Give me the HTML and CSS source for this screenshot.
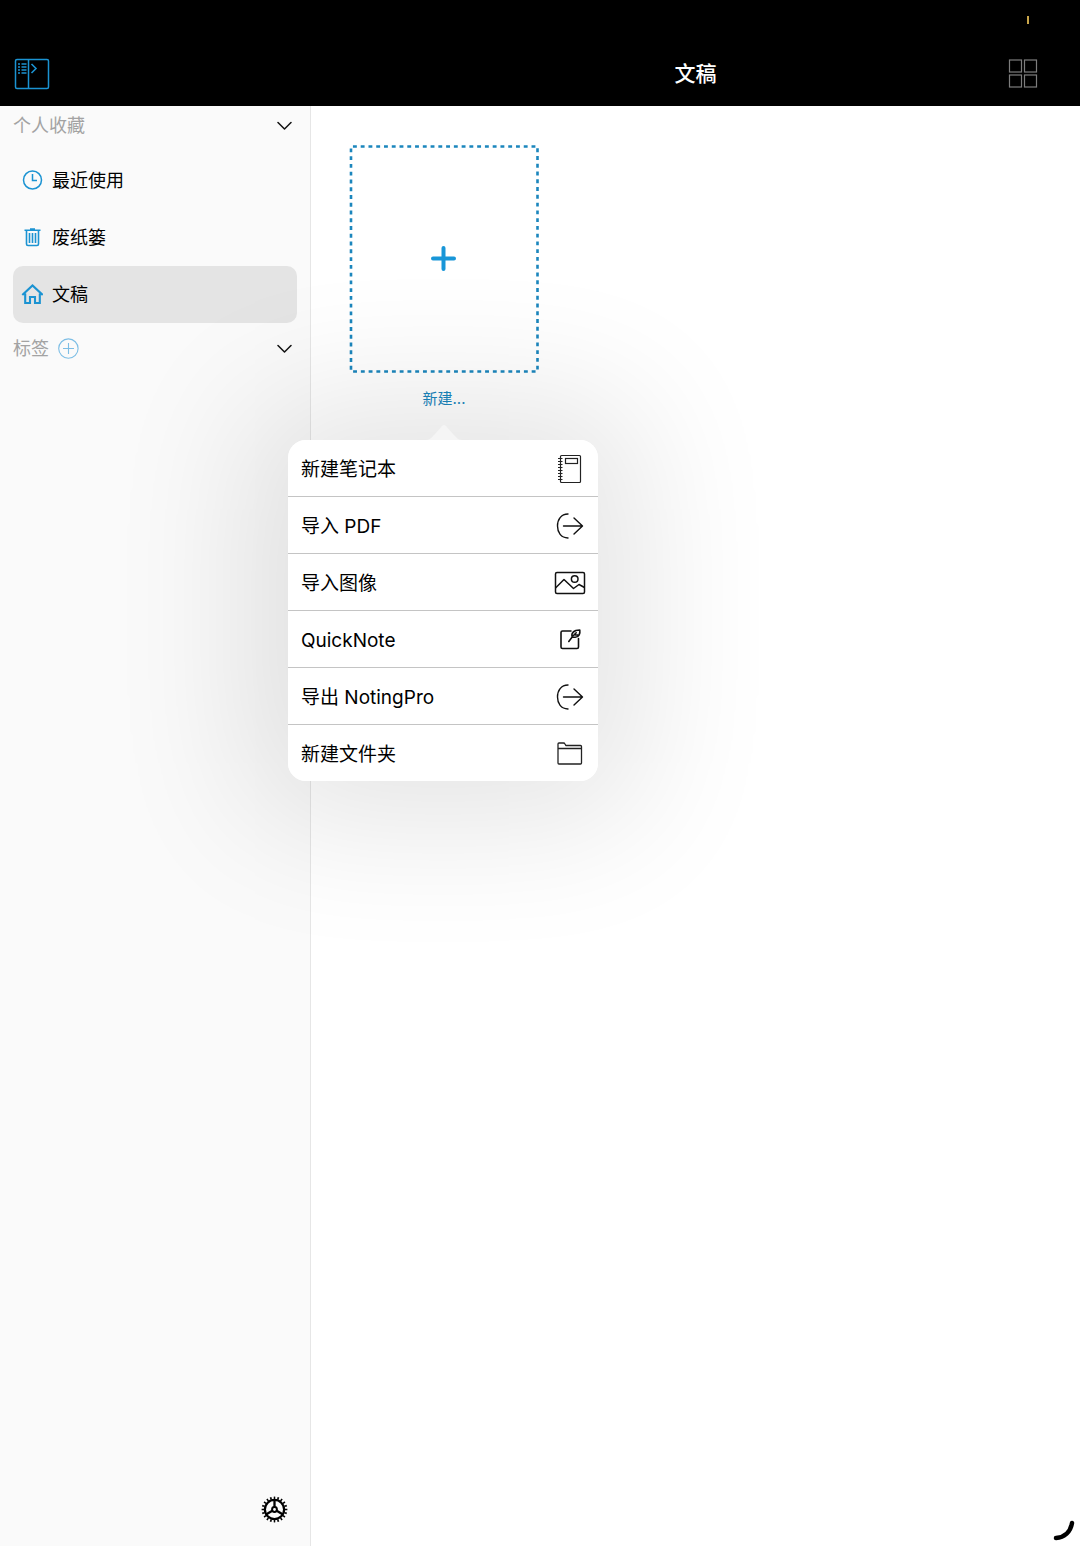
FILE: index.html
```html
<!DOCTYPE html>
<html lang="zh-CN">
<head>
<meta charset="utf-8">
<meta name="viewport" content="width=device-width, initial-scale=1">
<title>文稿</title>
<link rel="stylesheet" href="styles.css">
</head>
<body>
<div class="app">
  <header class="topbar">
    <span class="status-mark"></span>
    <div class="topbar-side">
      <button class="icon-button" type="button" aria-label="边栏">
        <svg width="36" height="32" viewBox="0 0 36 32" fill="none" stroke="#1b93d2" stroke-width="1.5">
          <rect x="1.5" y="1.5" width="33" height="29" rx="1.5"/>
          <path d="M14.5 1.5v29"/>
          <path d="M17.500 6l4.500 4.500-4.500 4.500" stroke-width="1.600"/>
          <path d="M4 6h2M7.500 6h5M4 9h2M7.500 9h5M4 12h2M7.500 12h5M4 15h2M7.500 15h5"/>
        </svg>
      </button>
    </div>
    <div class="topbar-main">
      <h1 class="title">文稿</h1>
      <button class="icon-button view-toggle" type="button" aria-label="网格视图">
        <svg width="30" height="30" viewBox="0 0 30 30" fill="none" stroke="#7d7d7d" stroke-width="1.200">
          <rect x="1.500" y="1" width="12" height="12"/>
          <rect x="16.500" y="1" width="12" height="12"/>
          <rect x="1.500" y="16" width="12" height="12"/>
          <rect x="16.500" y="16" width="12" height="12"/>
        </svg>
      </button>
    </div>
  </header>

  <div class="body">
    <aside class="sidebar">
      <div class="section-head">
        <h2 class="section-title">个人收藏</h2>
        <button class="icon-button chevron" type="button" aria-label="折叠个人收藏">
          <svg width="16" height="10" viewBox="0 0 16 10" fill="none" stroke="#111" stroke-width="1.500" stroke-linecap="round" stroke-linejoin="round"><path d="M2 1.500l6.500 6.500 6.500-6.500"/></svg>
        </button>
      </div>
      <nav class="nav">
        <a class="nav-item" href="#recent">
          <svg width="22" height="22" viewBox="0 0 22 22" fill="none" stroke="#1b93d2" stroke-width="1.500"><circle cx="11.500" cy="10" r="9"/><path d="M11.500 4v6.500h4.500"/></svg>
          最近使用
        </a>
        <a class="nav-item" href="#trash">
          <svg width="22" height="22" viewBox="0 0 22 22" fill="none" stroke="#1b93d2" stroke-width="1.600"><path d="M3.500 3.300h16M5.500 3.300v13.700q0 1.500 1.500 1.500h9q1.500 0 1.500-1.500V3.300M9 2h5M8.500 6v10M11.500 6v10M14.500 6v10"/></svg>
          废纸篓
        </a>
        <a class="nav-item selected" href="#documents" aria-current="page">
          <svg width="22" height="22" viewBox="0 0 22 22" fill="none" stroke="#1b93d2" stroke-width="2.100"><path d="M1.300 11L11.500 1.500l10.200 9.500M4.200 9.500v9.500h4.800v-6h5v6h4.800V9.500"/></svg>
          文稿
        </a>
      </nav>
      <div class="section-head">
        <h2 class="section-title">标签</h2>
        <button class="icon-button" type="button" aria-label="添加标签">
          <svg width="22" height="22" viewBox="0 0 22 22" fill="none" stroke="#7dbee5" stroke-width="1.100"><circle cx="11.400" cy="10.600" r="9.700"/><path d="M11.500 5v11M6 10.500h11"/></svg>
        </button>
        <button class="icon-button chevron" type="button" aria-label="折叠标签">
          <svg width="16" height="10" viewBox="0 0 16 10" fill="none" stroke="#111" stroke-width="1.500" stroke-linecap="round" stroke-linejoin="round"><path d="M2 1.500l6.500 6.500 6.500-6.500"/></svg>
        </button>
      </div>
      <div class="sidebar-foot">
        <button class="icon-button" type="button" aria-label="设置">
          <svg width="28" height="28" viewBox="0 0 28 28" fill="none" stroke="#000">
            <circle cx="14.500" cy="13.500" r="9.600" stroke-width="2.200"/>
            <circle cx="14.500" cy="13.500" r="11.600" stroke-width="2.600" pathLength="80" stroke-dasharray="1.700 2.300" stroke-dashoffset=".85"/>
            <circle cx="14.500" cy="13.500" r="2.400" stroke-width="2"/>
            <path d="M14.500 11V4M12.300 14.800L6 18.500M16.700 14.800L23 18.500" stroke-width="2.300"/>
          </svg>
        </button>
      </div>
    </aside>

    <main class="content">
      <div class="create">
        <button class="create-card" type="button">
          <svg class="create-frame" width="188" height="228" viewBox="0 0 188 228" fill="none" stroke="#1b86bd">
            <path d="M1 1.500h186.500v225H1z" stroke-width="2.600" pathLength="848" stroke-dasharray="4 4" stroke-dashoffset="-2"/>
            <path d="M93.500 103v21M83 113.500h21" stroke="#1896d8" stroke-width="4" stroke-linecap="round"/>
          </svg>
          <span class="create-label">新建...</span>
        </button>

        <div class="popover">
          <svg class="popover-arrow" width="36" height="17" viewBox="0 0 36 17" fill="#f5f5f5"><path d="M0 17c4 0 6-3 9-6l7-8q2-2 4 0l7 8c3 3 5 6 9 6z"/></svg>
          <div class="menu">
            <button class="menu-item" type="button">新建笔记本
              <svg width="32" height="32" viewBox="0 2 32 32" fill="none" stroke="#222" stroke-width="1.200"><rect x="6.500" y="3.500" width="20" height="27" rx="1"/><rect x="11.500" y="6.500" width="12" height="5"/><path d="M4 6.500h4.500M4 9.500h4.500M4 12.500h4.500M4 15.500h4.500M4 18.500h4.500M4 21.500h4.500M4 24.500h4.500M4 27.500h4.500"/></svg>
            </button>
            <button class="menu-item" type="button">导入 PDF
              <svg width="32" height="32" viewBox="0 2 32 32" fill="none" stroke="#111" stroke-width="1.400" stroke-linecap="round" stroke-linejoin="round"><path d="M14 5C7 5 3.500 10.500 3.500 17S7 29 14 29M9.500 17h18.500M20 9l8.500 8-8.500 8"/></svg>
            </button>
            <button class="menu-item" type="button">导入图像
              <svg width="32" height="32" viewBox="0 2 32 32" fill="none" stroke="#111" stroke-width="1.500" stroke-linejoin="round"><rect x="1.500" y="6.500" width="29" height="21" rx="1.500"/><circle cx="20.700" cy="13" r="3.300"/><path d="M1.500 22l8.500-8.500 9.500 9L25 18.500l5.500 3"/></svg>
            </button>
            <button class="menu-item" type="button">QuickNote
              <svg width="32" height="32" viewBox="0 2 32 32" fill="none" stroke="#111" stroke-width="1.600" stroke-linecap="round" stroke-linejoin="round"><path d="M17 8H8.500Q7 8 7 9.500v14.500Q7 25.500 8.500 25.500H23q1.500 0 1.500-1.500V15.500M14.800 18.500l3.400-4.500M18.200 14c-1.200-3.700 1.300-7 7.600-7 .5 3.500-.6 7-4.600 7.300zM19.500 12.500l2.700-2.700M21.500 12h2.500"/></svg>
            </button>
            <button class="menu-item" type="button">导出 NotingPro
              <svg width="32" height="32" viewBox="0 2 32 32" fill="none" stroke="#111" stroke-width="1.400" stroke-linecap="round" stroke-linejoin="round"><path d="M14 5C7 5 3.500 10.500 3.500 17S7 29 14 29M9.500 17h18.500M20 9l8.500 8-8.500 8"/></svg>
            </button>
            <button class="menu-item" type="button">新建文件夹
              <svg width="32" height="32" viewBox="0 2 32 32" fill="none" stroke="#222" stroke-width="1.300" stroke-linejoin="round"><path d="M4 12V7q0-1 1-1H9.500q1 0 1.500 1l.8 1.500h14.700q1 0 1 1V26q0 1-1 1H5q-1 0-1-1V11.500h23.500"/></svg>
            </button>
          </div>
        </div>
      </div>
    </main>
  </div>

  <svg class="corner-mark" width="24" height="24" viewBox="0 0 24 24" fill="none" stroke="#000" stroke-width="4.500" stroke-linecap="round"><path d="M4 19C12.500 18.500 18.500 13 20 4"/></svg>
</div>
</body>
</html>
```
FILE: styles.css
```css
* {
  box-sizing: border-box;
}

body {
  margin: 0;
  background: #fff;
  color: #000;
  font-family: Inter, "Noto Sans CJK SC", sans-serif;
  font-size: 18px;
}

h1,
h2 {
  margin: 0;
}

svg {
  display: block;
  flex: none;
}

button {
  margin: 0;
  padding: 0;
  border: 0;
  background: none;
  color: inherit;
  font: inherit;
  cursor: pointer;
}

.app {
  position: relative;
  display: flex;
  flex-direction: column;
  min-height: 100vh;
}

/* Top bar */
.topbar {
  position: relative;
  display: flex;
  padding-top: 42px;
  height: 106px;
  background: #000;
  color: #fff;
}

.topbar-side {
  display: flex;
  align-items: center;
  width: 311px;
  padding-left: 14px;
}

.topbar-main {
  display: grid;
  grid-template-columns: 1fr auto 1fr;
  align-items: center;
  flex: 1;
  padding: 0 42px;
}

.title {
  grid-column: 2;
  font-size: 21px;
  font-weight: 500;
  line-height: 32px;
}

.view-toggle {
  justify-self: end;
}

.status-mark {
  position: absolute;
  top: 16px;
  right: 51px;
  width: 2px;
  height: 8px;
  background: #c9a64a;
}

/* Sidebar */
.body {
  display: flex;
  flex: 1;
}

.sidebar {
  display: flex;
  flex-direction: column;
  gap: 6px;
  width: 311px;
  border-right: 1px solid #e6e6e6;
  background: #fafafa;
}

.section-head {
  display: flex;
  align-items: center;
  gap: 8px;
  height: 40px;
  padding: 0 18px 0 13px;
}

.section-title {
  color: #a3a3a3;
  font-size: 18px;
  font-weight: 400;
  line-height: 28px;
}

.chevron {
  margin-left: auto;
}

.nav {
  display: flex;
  flex-direction: column;
  padding: 0 13px;
}

.nav-item {
  display: flex;
  align-items: center;
  gap: 9px;
  height: 57px;
  padding: 0 8px;
  border-radius: 10px;
  color: #000;
  line-height: 28px;
  text-decoration: none;
}

.nav-item.selected {
  background: #e4e4e4;
}

.sidebar-foot {
  display: flex;
  justify-content: flex-end;
  margin-top: auto;
  padding: 0 22px 22px;
}

/* Documents */
.content {
  flex: 1;
  padding: 39px;
}

.create {
  position: relative;
  width: 188px;
}

.create-card {
  display: flex;
  flex-direction: column;
  align-items: center;
  gap: 14px;
}

.create-frame {
  overflow: visible;
}

.create-label {
  color: #1b86bd;
  font-size: 15px;
  line-height: 24px;
}

/* Popover menu, anchored under the card */
.popover {
  position: absolute;
  top: 100%;
  left: 50%;
  width: 310px;
  margin-top: 29px;
  margin-left: -156px;
  border-radius: 18px;
  box-shadow: 0 0 140px 40px rgba(0, 0, 0, 0.11);
}

.popover-arrow {
  position: absolute;
  bottom: 100%;
  left: 50%;
  margin-left: -17px;
}

.menu {
  overflow: hidden;
  border-radius: 18px;
  background: #fff;
}

.menu-item {
  display: flex;
  align-items: center;
  justify-content: space-between;
  width: 100%;
  height: 57px;
  padding: 4px 12px 0 13px;
  border-bottom: 1px solid #c4c4c4;
  font-size: 19px;
  line-height: 28px;
  text-align: left;
}

.menu-item:last-child {
  height: 56px;
  border-bottom: 0;
}

.corner-mark {
  position: absolute;
  right: 4px;
  bottom: 3px;
}
```
